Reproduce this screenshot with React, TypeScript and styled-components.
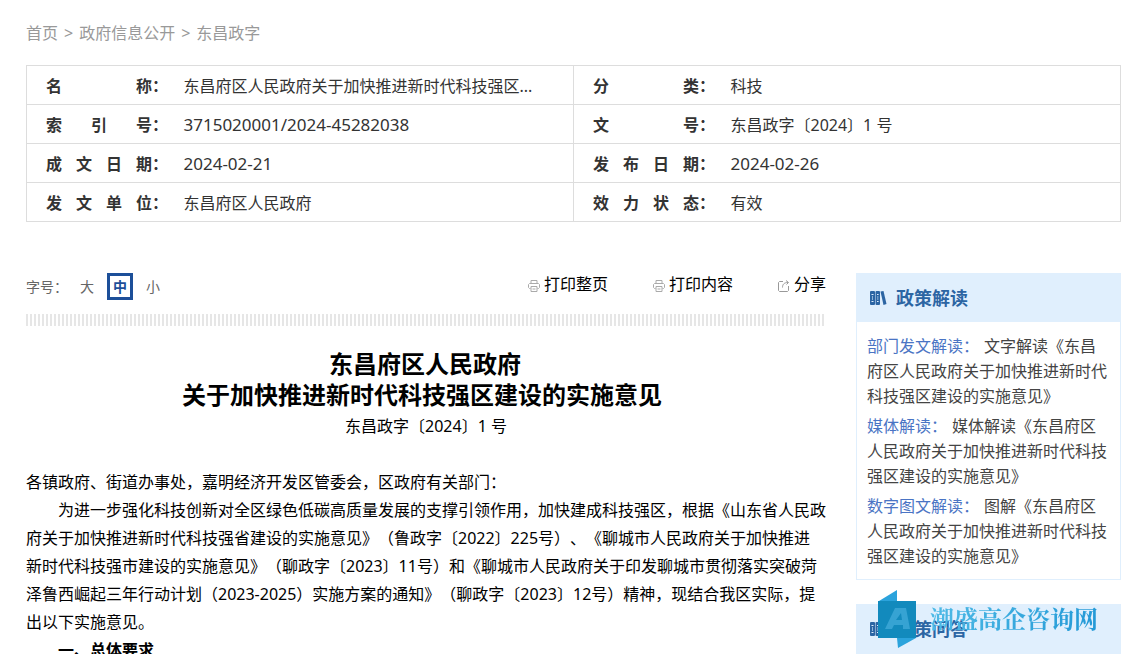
import React from "react";
import styled, { createGlobalStyle, css } from "styled-components";

const GlobalStyle = createGlobalStyle`
  * { box-sizing: border-box; }
  html { background: #fff; }
  body {
    margin: 0;
    font-family: "Noto Sans", "Noto Sans CJK SC", sans-serif;
    font-size: 16px;
    line-height: 28px;
    color: #000;
    text-spacing-trim: space-all;
  }
  a { color: inherit; text-decoration: none; }
  button { font: inherit; color: inherit; background: none; border: 0; padding: 0; cursor: pointer; }
`;

const Page = styled.div`
  position: relative;
  height: 100vh;
  overflow: hidden;
  padding: 20px 25px 0 26px;
`;

const Breadcrumb = styled.nav`
  display: flex;
  gap: 6px;
  color: #999;
  line-height: 26px;
`;

const InfoTable = styled.table`
  width: 100%;
  margin-top: 19px;
  table-layout: fixed;
  border-collapse: collapse;
  border: 1px solid #ddd;
  color: #333;
  line-height: 24px;
`;

const InfoLabel = styled.th`
  width: 157px;
  height: 39px;
  padding: 1px 0 0 19px;
  border: solid #ddd;
  border-width: 1px 0 1px 1px;
`;

const LabelRow = styled.div`
  display: flex;
`;

const LabelText = styled.span`
  display: flex;
  justify-content: space-between;
  width: 106px;
`;

const InfoValue = styled.td<{ $numeric?: boolean }>`
  padding: 1px 20px 0 0;
  border: solid #ddd;
  border-width: 1px 0;
  font-size: ${(p) => (p.$numeric ? 17 : 16)}px;
`;

const Columns = styled.div`
  display: flex;
  align-items: flex-start;
  gap: 30px;
  margin-top: 51px;
`;

const Article = styled.main`
  flex: 1;
  min-width: 0;
`;

const Toolbar = styled.div`
  display: flex;
  align-items: flex-start;
  justify-content: space-between;
`;

const FontSizes = styled.div`
  display: flex;
  align-items: center;
  gap: 13px;
  color: #666;
  font-size: 14px;
  line-height: 20px;
`;

const SizeLabel = styled.span`
  width: 41px;
  white-space: nowrap;
`;

const SizeButton = styled.button<{ $active?: boolean }>`
  height: 27px;
  ${(p) =>
    p.$active &&
    css`
      width: 26px;
      border: 3px solid #1d4f99;
      color: #1d4f99;
      font-weight: 700;
    `}
`;

const Actions = styled.div`
  display: flex;
  gap: 45px;
`;

const ActionButton = styled.button`
  display: flex;
  align-items: center;
  gap: 4px;
  line-height: 22px;
  svg { margin-top: 3px; }
`;

const Stripes = styled.div`
  height: 12px;
  margin-top: 14px;
  background: repeating-linear-gradient(90deg, #e6e6e6 0 2px, #fff 2px 4px);
`;

const Title = styled.h1`
  margin: 22px 0 0;
  padding-right: 8px;
  font-size: 24px;
  line-height: 31px;
  text-align: center;
`;

const DocNumber = styled.p`
  margin: 2px 0 28px;
  text-align: center;
`;

const Paragraph = styled.p<{ $indent?: boolean }>`
  margin: 0;
  text-indent: ${(p) => (p.$indent ? 32 : 0)}px;
`;

const SectionTitle = styled.h2`
  margin: 0;
  font-size: 16px;
  line-height: 28px;
  text-indent: 32px;
`;

const Sidebar = styled.aside`
  width: 265px;
  display: flex;
  flex-direction: column;
  gap: 24px;
`;

const Card = styled.section`
  border: 1px solid #e0effd;
`;

const CardTitle = styled.h2`
  display: flex;
  align-items: center;
  gap: 9px;
  height: 48px;
  margin: 0;
  padding: 0 12px;
  background: #e0effd;
  color: #2c65a3;
  font-size: 18px;
`;

const CardList = styled.ul`
  display: flex;
  flex-direction: column;
  gap: 5px;
  margin: 0;
  padding: 12px 10px 10px;
  list-style: none;
  color: #444;
  line-height: 25px;
`;

const Category = styled.span`
  margin-right: 5px;
  color: #4a74c4;
`;

const Watermark = styled.div`
  position: absolute;
  top: 590px;
  right: 48px;
  display: flex;
  gap: 14px;
`;

const WatermarkText = styled.span`
  color: transparent;
  background: linear-gradient(100deg, #4fbbe6, #2298d6);
  background-clip: text;
  font-family: "Noto Serif CJK SC", "Noto Sans CJK SC", serif;
  font-size: 24px;
  font-weight: 700;
  line-height: 56px;
`;

const PrinterIcon = () => (
  <svg width="12" height="12" viewBox="0 0 12 12" fill="none" stroke="#aaa" aria-hidden="true">
    <path d="M3 3V.5h6V3M2.500 8.500h-1l-1-1V4.500l1-1h9l1 1v3l-1 1h-1M3 6.500h6v5H3zM4.500 9h3" />
  </svg>
);

const ShareIcon = () => (
  <svg width="12" height="12" viewBox="0 0 12 12" fill="none" stroke="#999" aria-hidden="true">
    <path d="M5 1.500H1.500L.5 2.500v8l1 1h8l1-1V6M4.500 7.500C4.500 4.500 6 2.500 10 2.500M8 .5l2.500 2L8.500 4.500" />
  </svg>
);

const BooksIcon = () => (
  <svg width="18" height="16" viewBox="0 0 18 16" aria-hidden="true">
    <g fill="#2c65a3">
      <rect x="1" y="1" width="5" height="14" rx="1" />
      <rect x="6.500" y="1" width="4.500" height="14" rx="1" />
      <path d="M11.500 1.500 14.500 1l3 13-3 1z" />
    </g>
    <path d="M2.500 4.500h2M2.500 11.500h2M8 4.500h1.600M8 11.500h1.600" stroke="#e0effd" />
    <path d="M3 6h1v4H3zM8.300 6h1v4h-1z" fill="#8fb4d8" />
  </svg>
);

const WatermarkLogo = () => (
  <svg width="38" height="58" viewBox="0 0 38 58" aria-hidden="true">
    <path d="M1 11 19 0v11zM19 48h19L20 58z" fill="#2ba3dc" />
    <path d="M0 11h38v37H0z" fill="#128abd" />
    <path d="M7 39 17 18h11l4 21h-7v-4h-9l-2 4zM18 30h6l-1-7z" fill="#36a3d3" fillRule="evenodd" />
  </svg>
);

type Entry = { label: string; value: string; numeric?: boolean };

const infoRows: Entry[][] = [
  [
    { label: "名称", value: "东昌府区人民政府关于加快推进新时代科技强区..." },
    { label: "分类", value: "科技" },
  ],
  [
    { label: "索引号", value: "3715020001/2024-45282038", numeric: true },
    { label: "文号", value: "东昌政字〔2024〕1 号" },
  ],
  [
    { label: "成文日期", value: "2024-02-21", numeric: true },
    { label: "发布日期", value: "2024-02-26", numeric: true },
  ],
  [
    { label: "发文单位", value: "东昌府区人民政府" },
    { label: "效力状态", value: "有效" },
  ],
];

const readings = [
  ["部门发文解读：", "文字解读《东昌府区人民政府关于加快推进新时代科技强区建设的实施意见》"],
  ["媒体解读：", "媒体解读《东昌府区人民政府关于加快推进新时代科技强区建设的实施意见》"],
  ["数字图文解读：", "图解《东昌府区人民政府关于加快推进新时代科技强区建设的实施意见》"],
];

export default function App() {
  return (
    <Page>
      <GlobalStyle />
      <Breadcrumb aria-label="当前位置">
        <a href="#home">首页</a>
        <span>&gt;</span>
        <a href="#open">政府信息公开</a>
        <span>&gt;</span>
        <a href="#docs">东昌政字</a>
      </Breadcrumb>

      <InfoTable>
        <tbody>
          {infoRows.map((row) => (
            <tr key={row[0].label}>
              {row.map((entry) => (
                <React.Fragment key={entry.label}>
                  <InfoLabel scope="row">
                    <LabelRow>
                      <LabelText>
                        {entry.label.split("").map((char, i) => (
                          <span key={i}>{char}</span>
                        ))}
                      </LabelText>
                      ：
                    </LabelRow>
                  </InfoLabel>
                  <InfoValue $numeric={entry.numeric}>{entry.value}</InfoValue>
                </React.Fragment>
              ))}
            </tr>
          ))}
        </tbody>
      </InfoTable>

      <Columns>
        <Article>
          <Toolbar>
            <FontSizes>
              <SizeLabel>字号：</SizeLabel>
              <SizeButton type="button">大</SizeButton>
              <SizeButton type="button" $active>中</SizeButton>
              <SizeButton type="button">小</SizeButton>
            </FontSizes>
            <Actions>
              <ActionButton type="button"><PrinterIcon />打印整页</ActionButton>
              <ActionButton type="button"><PrinterIcon />打印内容</ActionButton>
              <ActionButton type="button"><ShareIcon />分享</ActionButton>
            </Actions>
          </Toolbar>
          <Stripes />
          <Title>
            &nbsp;东昌府区人民政府
            <br />
            关于加快推进新时代科技强区建设的实施意见
          </Title>
          <DocNumber>东昌政字〔2024〕1 号</DocNumber>
          <Paragraph>各镇政府、街道办事处，嘉明经济开发区管委会，区政府有关部门：</Paragraph>
          <Paragraph $indent>
            为进一步强化科技创新对全区绿色低碳高质量发展的支撑引领作用，加快建成科技强区，根据《山东省人民政府关于加快推进新时代科技强省建设的实施意见》（鲁政字〔2022〕225号）、《聊城市人民政府关于加快推进新时代科技强市建设的实施意见》（聊政字〔2023〕11号）和《聊城市人民政府关于印发聊城市贯彻落实突破菏泽鲁西崛起三年行动计划（2023-2025）实施方案的通知》（聊政字〔2023〕12号）精神，现结合我区实际，提出以下实施意见。
          </Paragraph>
          <SectionTitle>一、总体要求</SectionTitle>
        </Article>

        <Sidebar>
          <Card>
            <CardTitle><BooksIcon />政策解读</CardTitle>
            <CardList>
              {readings.map(([category, title]) => (
                <li key={category}>
                  <Category>{category}</Category>
                  <a href="#reading">{title}</a>
                </li>
              ))}
            </CardList>
          </Card>
          <Card>
            <CardTitle><BooksIcon />政策问答</CardTitle>
          </Card>
        </Sidebar>
      </Columns>

      <Watermark>
        <WatermarkLogo />
        <WatermarkText>潮盛高企咨询网</WatermarkText>
      </Watermark>
    </Page>
  );
}
